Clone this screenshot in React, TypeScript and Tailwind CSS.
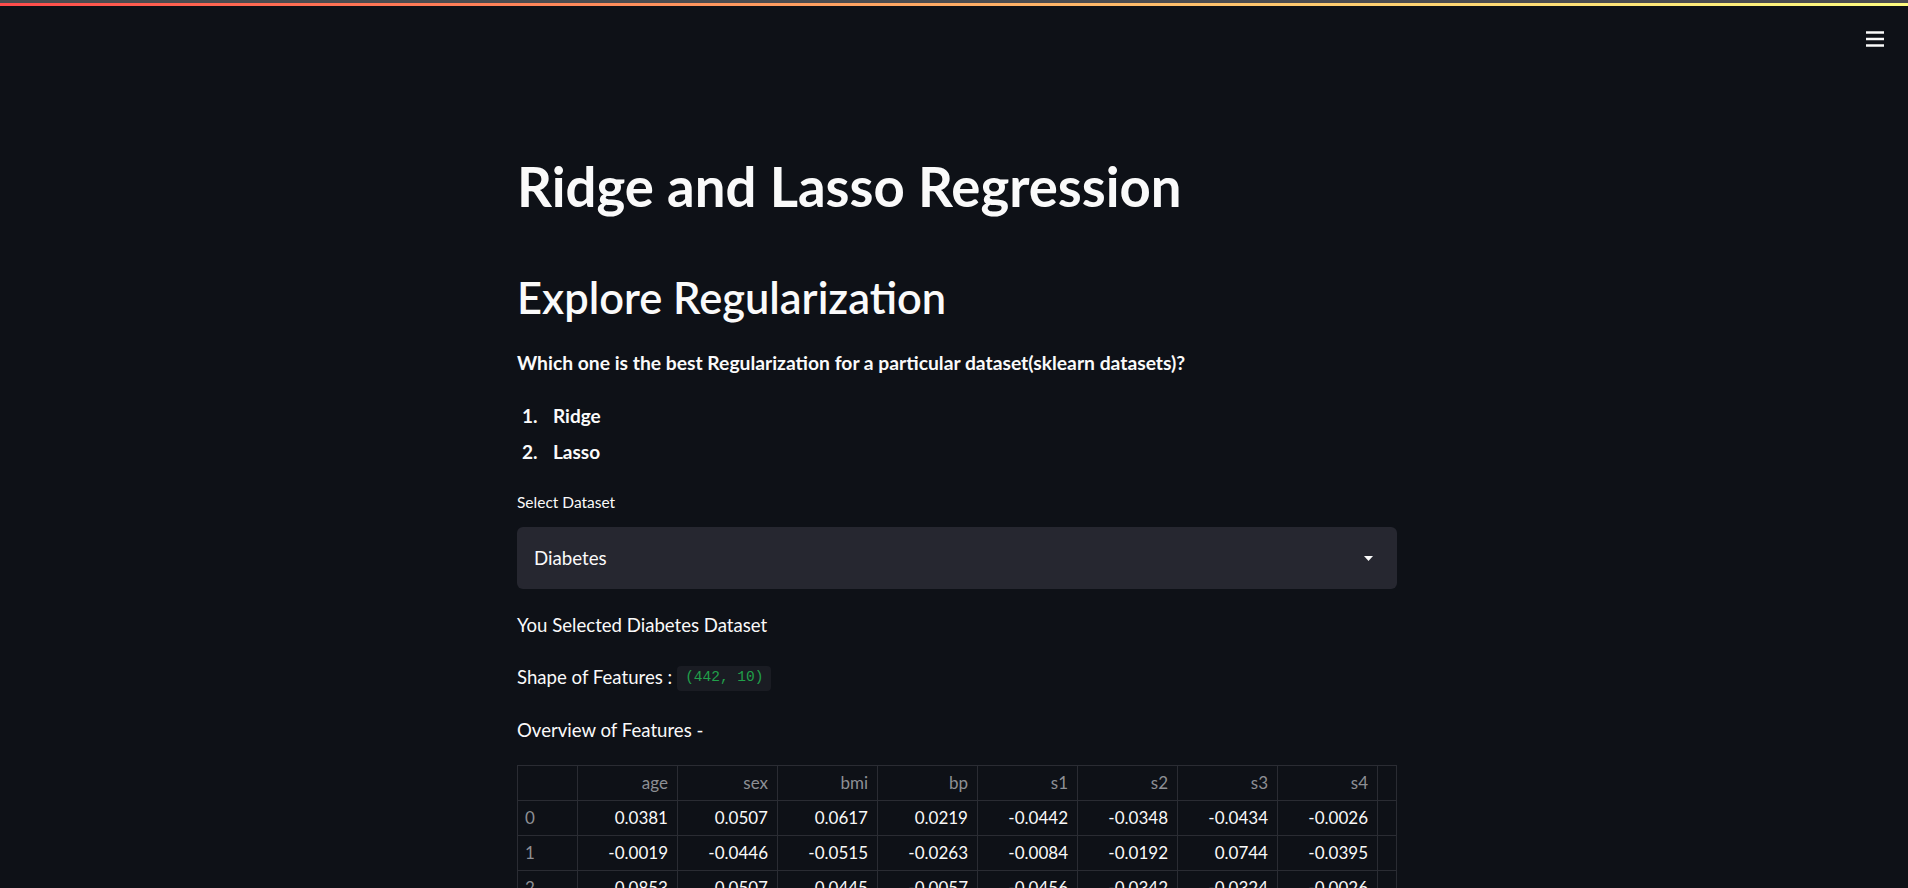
import React from "react";

const font = { fontFamily: "Lato, 'Open Sans', sans-serif" };

const cols = ["age", "sex", "bmi", "bp", "s1", "s2", "s3", "s4"];
const rows = [
  ["0.0381", "0.0507", "0.0617", "0.0219", "-0.0442", "-0.0348", "-0.0434", "-0.0026"],
  ["-0.0019", "-0.0446", "-0.0515", "-0.0263", "-0.0084", "-0.0192", "0.0744", "-0.0395"],
  ["0.0853", "0.0507", "0.0445", "-0.0057", "-0.0456", "-0.0342", "-0.0324", "-0.0026"],
];

const Hamburger = () => (
  <svg width="18" height="16" viewBox="0 0 18 16" fill="none">
    <line x1="0" y1="1.5" x2="18" y2="1.5" stroke="#fafafa" strokeWidth="2.5" />
    <line x1="0" y1="8" x2="18" y2="8" stroke="#fafafa" strokeWidth="2.5" />
    <line x1="0" y1="14.5" x2="18" y2="14.5" stroke="#fafafa" strokeWidth="2.5" />
  </svg>
);

const DataTable = () => {
  const cell = "h-[35px] border-r border-b border-[#2a2c33] flex items-center";
  return (
    <div className="border-l border-t border-[#2a2c33] grid grid-cols-[60px_repeat(8,100px)_19px] text-[17px]">
      {/* header */}
      <div className={cell} />
      {cols.map((c) => (
        <div key={c} className={`${cell} justify-end pr-[9px] text-[#8d8f94]`}>
          {c}
        </div>
      ))}
      <div className={cell} />
      {rows.map((r, i) => (
        <React.Fragment key={i}>
          <div className={`${cell} pl-[7px] text-[#8d8f94]`}>{i}</div>
          {r.map((v, j) => (
            <div key={j} className={`${cell} justify-end pr-[9px] text-[#fafafa]`}>
              {v}
            </div>
          ))}
          <div className={cell} />
        </React.Fragment>
      ))}
    </div>
  );
};

export default function App() {
  return (
    <div className="min-h-screen h-[888px] overflow-hidden bg-[#0e1117] text-[#fafafa]" style={font}>
      {/* top decoration */}
      <div className="h-[3px] bg-[#4b4c50]" />
      <div className="h-[3px] bg-gradient-to-r from-[#ff4b4b] to-[#fffd80]" />

      {/* header */}
      <div className="h-[60px] flex justify-end items-start pt-[25px] pr-[24px]">
        <Hamburger />
      </div>

      <div className="pl-[6px]">
        <div className="mx-auto w-[880px] pt-[90px]">
          <h1 className="h-[60px] leading-[60px] text-[54.5px] font-bold whitespace-nowrap">
            Ridge and Lasso Regression
          </h1>

          <h2 className="mt-[54px] h-[54px] leading-[54px] text-[43.4px] font-semibold whitespace-nowrap">
            Explore Regularization
          </h2>

          <p className="mt-[24px] h-[30px] leading-[30px] text-[19.3px] font-bold whitespace-nowrap">
            Which one is the best Regularization for a particular dataset(sklearn datasets)?
          </p>

          <ol className="mt-[20px] text-[19px] font-bold">
            <li className="flex h-[36px] items-center">
              <span className="w-[36px] pl-[5px]">1.</span>
              Ridge
            </li>
            <li className="flex h-[36px] items-center">
              <span className="w-[36px] pl-[5px]">2.</span>
              Lasso
            </li>
          </ol>

          <div className="mt-[21px] h-[22px] leading-[22px] text-[15.5px]">Select Dataset</div>

          <div className="mt-[14px] h-[62px] rounded-[6px] bg-[#262730] flex items-center justify-between pl-[17px] pr-[24px]">
            <span className="text-[18.7px]">Diabetes</span>
            <svg width="9" height="5" viewBox="0 0 9 5">
              <polygon points="0,0 9,0 4.5,5" fill="#fafafa" />
            </svg>
          </div>

          <p className="mt-[21px] h-[30px] leading-[30px] text-[18.6px]">You Selected Diabetes Dataset</p>

          <p className="mt-[23px] h-[30px] flex items-center text-[18.6px]">
            <span>Shape of Features :</span>
            <code
              className="ml-[5px] h-[25px] px-[8px] flex items-center rounded-[4px] bg-[#1a1c23] text-[#21a04a] text-[14.5px]"
              style={{ fontFamily: "'Liberation Mono', 'DejaVu Sans Mono', monospace" }}
            >
              (442, 10)
            </code>
          </p>

          <p className="mt-[22px] h-[30px] leading-[30px] text-[18.6px]">Overview of Features -</p>

          <div className="mt-[20px]">
            <DataTable />
          </div>
        </div>
      </div>
    </div>
  );
}
